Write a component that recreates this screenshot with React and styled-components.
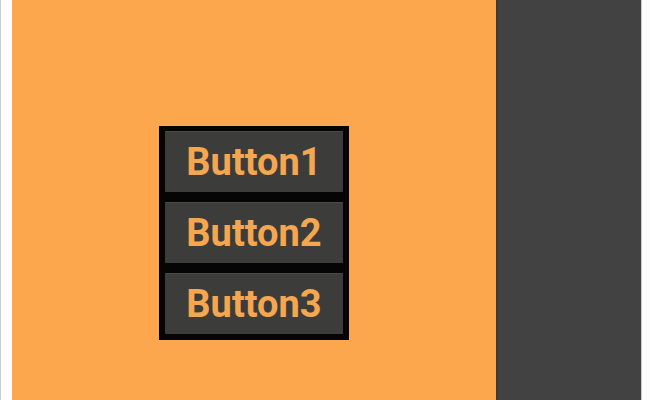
import React from 'react';
import styled, { createGlobalStyle } from 'styled-components';

const GlobalStyle = createGlobalStyle`
  html, body {
    margin: 0;
    padding: 0;
    background: #ffffff;
  }
  body {
    font-family: Roboto, "Noto Sans", sans-serif;
  }
`

const Screen = styled.div`
  display: flex;
  height: 400px;
  width: 650px;
  overflow: hidden;
`

const Gutter = styled.div`
  width: ${({ w }) => w}px;
  background: #fdfdfd;
  border-${({ side }) => side}: 1px solid #c9cdd1;
  box-sizing: border-box;
`

const Stage = styled.div`
  width: 484px;
  background-color: #fca64e;
  display: flex;
  justify-content: center;
  align-items: flex-start;
  padding-top: 126px;
  box-sizing: border-box;
`

const SidePanel = styled.div`
  width: 145px;
  background-color: #424242;
  border-left: 2px solid #3a3a3a;
  box-sizing: border-box;
`

const ButtonGroup = styled.div`
  display: flex;
  flex-direction: column;
  gap: 10px;
  padding: 5px 6px 6px 6px;
  background-color: #050505;
`

const MenuButton = styled.button`
  width: 178px;
  height: 61px;
  display: flex;
  align-items: center;
  justify-content: center;
  background-color: #3c3d3b;
  border: none;
  border-top: 1px solid #4a4b49;
  border-radius: 1px;
  color: #f5a651;
  font-family: Roboto, "Noto Sans", sans-serif;
  font-weight: 700;
  font-size: 38px;
  padding: 0;
  cursor: pointer;
`

const App = () => {
    const buttons = ['Button1', 'Button2', 'Button3'];

    return (
        <>
            <GlobalStyle />
            <Screen>
                <Gutter w={12} side="left" />
                <Stage>
                    <ButtonGroup>
                        {buttons.map((label) => (
                            <MenuButton key={label}>{label}</MenuButton>
                        ))}
                    </ButtonGroup>
                </Stage>
                <SidePanel />
                <Gutter w={9} side="left" />
            </Screen>
        </>
    );
};

export default App;
